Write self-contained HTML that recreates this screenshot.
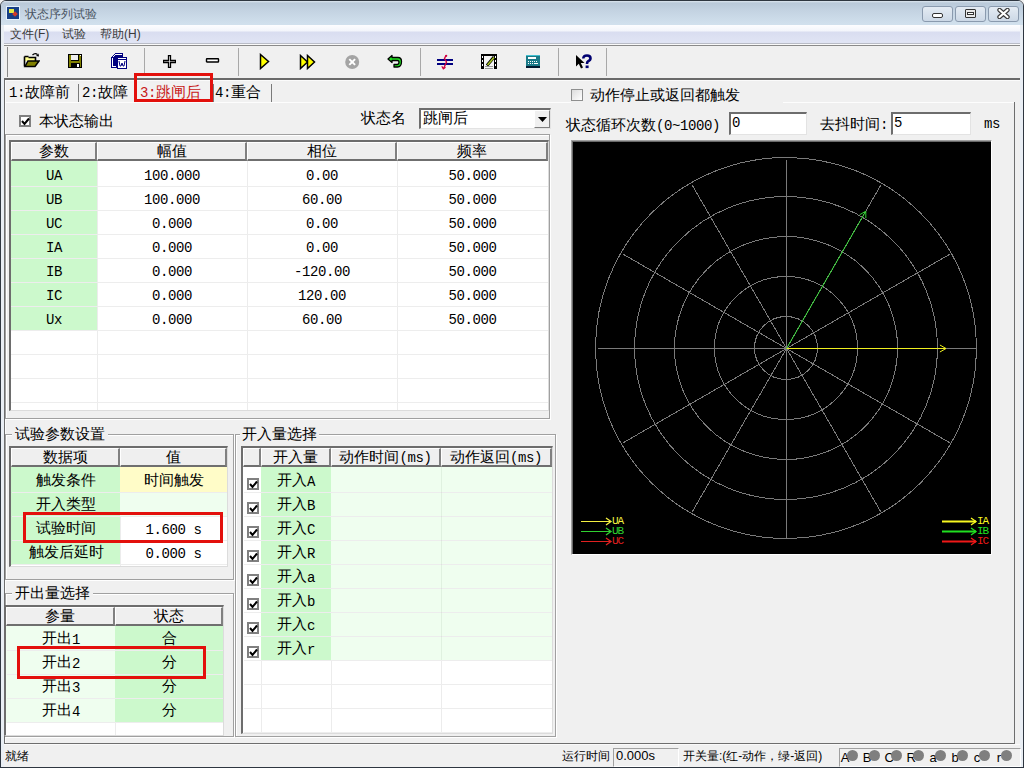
<!DOCTYPE html>
<html><head><meta charset="utf-8">
<style>
*{margin:0;padding:0;box-sizing:border-box}
html,body{width:1024px;height:768px;overflow:hidden;background:#f0f0f0}
body{position:relative;font-family:"Liberation Sans",sans-serif;font-size:12px;color:#000}
.a{position:absolute}
.t{position:absolute;white-space:nowrap;line-height:16px;font-size:15px}
.m{font-family:"Liberation Mono",monospace;font-size:14px;letter-spacing:-0.4px}
.hl{position:absolute;height:1px}
.vl{position:absolute;width:1px}
.etch{position:absolute;border:1px solid #a0a0a0;box-shadow:1px 1px 0 #fff, inset 1px 1px 0 #fff}
.sunk{position:absolute;border-top:1px solid #a0a0a0;border-left:1px solid #a0a0a0;border-right:1px solid #fff;border-bottom:1px solid #fff}
.sunk2{position:absolute;border-top:2px solid #6d6d6d;border-left:2px solid #6d6d6d;border-right:1px solid #e3e3e3;border-bottom:1px solid #e3e3e3}
.hdr{position:absolute;background:#efefef;border-right:2px solid #808080;border-bottom:2px solid #6f6f6f;border-top:1px solid #fff;border-left:1px solid #fff;text-align:center;line-height:16px;font-size:15px;white-space:nowrap}
.cell{position:absolute;z-index:3;text-align:center;white-space:nowrap;line-height:24px;font-size:15px}
.red{position:absolute;z-index:4;border:3px solid #e3100c}
.cell .m{position:relative;top:1px}
.cb{position:absolute;z-index:3;width:12px;height:12px;background:#fff;border:2px solid #808080;box-shadow:inset 0 0 0 0 #000}
.c{display:inline-block;width:1em;text-align:center;font-style:normal}
</style></head><body>

<!-- window frame -->
<div class="a" style="left:0;top:0;width:1024px;height:768px;border:1px solid #2e3640;border-radius:6px 6px 0 0"></div>
<!-- title bar -->
<div class="a" style="left:1px;top:1px;width:1022px;height:24px;border-radius:5px 5px 0 0;background:linear-gradient(#dde6ef 0px,#b9c9d9 2px,#c4d3e2 10px,#d1e0ed 23px)"></div>
<div class="a" style="left:6px;top:6px;width:14px;height:14px;background:#173f85;border:1px solid #e6f2fb"></div>
<div class="a" style="left:9px;top:9px;width:5px;height:4px;background:#e4e848"></div>
<div class="a" style="left:13px;top:12px;width:4px;height:4px;background:#d23a28;transform:rotate(45deg)"></div>
<div class="t" style="left:25px;top:6px;color:#4a5462;font-size:12px;line-height:16px"><i class="c">状</i><i class="c">态</i><i class="c">序</i><i class="c">列</i><i class="c">试</i><i class="c">验</i></div>
<!-- caption buttons -->
<div class="a" style="left:922px;top:6px;width:31px;height:16px;border:1px solid #8a9aae;border-radius:3px;background:linear-gradient(#e4ebf3,#ccd8e6)"></div>
<div class="a" style="left:932px;top:13px;width:11px;height:5px;border:1px solid #333;background:#fff;border-radius:2px"></div>
<div class="a" style="left:955px;top:6px;width:31px;height:16px;border:1px solid #8a9aae;border-radius:3px;background:linear-gradient(#e4ebf3,#ccd8e6)"></div>
<div class="a" style="left:965px;top:9px;width:11px;height:9px;border:1px solid #333;border-radius:1px;background:#e8e8e8"></div>
<div class="a" style="left:967px;top:12px;width:7px;height:3px;border:1px solid #333;background:#fff"></div>
<div class="a" style="left:988px;top:6px;width:31px;height:16px;border:1px solid #8a9aae;border-radius:3px;background:linear-gradient(#e4ebf3,#ccd8e6)"></div>
<svg class="a" style="left:997px;top:8px" width="13" height="11" viewBox="0 0 13 11"><path d="M2.5 2 L10.5 9 M10.5 2 L2.5 9" stroke="#3a3a3a" stroke-width="4.4" stroke-linecap="round"/><path d="M2.5 2 L10.5 9 M10.5 2 L2.5 9" stroke="#fff" stroke-width="2.2" stroke-linecap="round"/></svg>

<!-- left/right window sides -->
<div class="a" style="left:1px;top:25px;width:3px;height:742px;background:#e9eef4"></div>
<div class="a" style="left:1020px;top:25px;width:3px;height:742px;background:#e9eef4"></div>

<!-- menu bar -->
<div class="a" style="left:4px;top:25px;width:1016px;height:18px;background:linear-gradient(#fdfdff 0px,#f3f5fb 6px,#d9ddf0 7px,#e0e4f4 17px)"></div>
<div class="t" style="left:10px;top:26px;font-size:12px;color:#3a3a3a"><i class="c">文</i><i class="c">件</i>(F)</div>
<div class="t" style="left:62px;top:26px;font-size:12px;color:#3a3a3a"><i class="c">试</i><i class="c">验</i></div>
<div class="t" style="left:100px;top:26px;font-size:12px;color:#3a3a3a"><i class="c">帮</i><i class="c">助</i>(H)</div>
<div class="hl" style="left:4px;top:43px;width:1016px;background:#b9bcc6"></div>
<div class="hl" style="left:4px;top:44px;width:1016px;background:#fafafa"></div>
<div class="hl" style="left:4px;top:45px;width:1016px;background:#8a8a8a"></div>

<!-- toolbar -->
<div class="a" style="left:4px;top:46px;width:1016px;height:33px;background:#f0f0f0"></div>
<div class="vl" style="left:7px;top:47px;height:30px;background:#8a8a8a"></div>
<div class="hl" style="left:4px;top:78px;width:1016px;height:2px;background:#6a6a6a"></div>
<div class="vl" style="left:144px;top:48px;height:28px;background:#a8a8a8"></div>
<div class="vl" style="left:238px;top:48px;height:28px;background:#a8a8a8"></div>
<div class="vl" style="left:420px;top:48px;height:28px;background:#a8a8a8"></div>
<div class="vl" style="left:558px;top:48px;height:28px;background:#a8a8a8"></div>
<div class="vl" style="left:606px;top:48px;height:28px;background:#a8a8a8"></div>
<svg class="a" style="left:23px;top:52px" width="17" height="16" viewBox="0 0 17 16" shape-rendering="crispEdges"><path d="M2 4 H5 V5 H12 V9 H2 Z" fill="#ffff90"/><path d="M1.5 14.5 V4.5 M1.5 4.5 H5.5 M5.5 5.5 H12.5 V9" stroke="#000" stroke-width="1.6" fill="none" shape-rendering="auto"/><path d="M5 9 H16 L12 14.5 H2 Z" fill="#808000" stroke="#000" stroke-width="1.5" shape-rendering="auto"/><path d="M9.5 3 Q12 0.5 14.5 2.5" stroke="#000" stroke-width="1.3" fill="none" shape-rendering="auto"/><path d="M13 4 L16 4.5 L15.5 1.5 Z" fill="#000" shape-rendering="auto"/></svg>
<svg class="a" style="left:68px;top:54px" width="14" height="14" viewBox="0 0 14 14" shape-rendering="crispEdges"><rect x="0" y="0" width="14" height="14" fill="#000"/><rect x="1" y="1" width="12" height="12" fill="#808000"/><rect x="3" y="1" width="8" height="6" fill="#000"/><rect x="3" y="1" width="7" height="5" fill="#eeeeee"/><rect x="3" y="9" width="9" height="5" fill="#000"/><rect x="9" y="10" width="2" height="3" fill="#fff"/><rect x="12" y="1" width="1" height="1" fill="#fff"/></svg>
<svg class="a" style="left:110px;top:52px" width="18" height="18" viewBox="0 0 18 18" shape-rendering="crispEdges"><path d="M1 5 L5 1 H13 V16 H1 Z" fill="#000080"/><path d="M2.5 5.5 L5.5 2.5 H11.5 M2.5 5.5 V14.5 H6" stroke="#fff" stroke-width="1" fill="none"/><rect x="7" y="5" width="10" height="12" fill="#000080"/><rect x="8" y="8" width="8" height="8" fill="#fff"/><rect x="8" y="6" width="8" height="1" fill="#fff"/><path d="M9 9 L10 14 H11 L12 11 L13 14 H14 L15 9" stroke="#000080" stroke-width="1" fill="none" shape-rendering="auto"/></svg>
<svg class="a" style="left:163px;top:55px" width="13" height="13" viewBox="0 0 13 13" shape-rendering="crispEdges"><path d="M5 0 H8 V5 H13 V8 H8 V13 H5 V8 H0 V5 H5 Z" fill="#fff"/><path d="M5.5 0.5 H7.5 V5.5 H12.5 V7.5 H7.5 V12.5 H5.5 V7.5 H0.5 V5.5 H5.5 Z" fill="#fff" stroke="#000" stroke-width="1.3" shape-rendering="auto"/></svg>
<svg class="a" style="left:205px;top:58px" width="15" height="5" viewBox="0 0 15 5" shape-rendering="crispEdges"><rect x="1.5" y="0.8" width="12" height="3.2" rx="0.5" fill="#fff" stroke="#000" stroke-width="1.4" shape-rendering="auto"/></svg>
<svg class="a" style="left:259px;top:53px" width="11" height="17" viewBox="0 0 11 17" shape-rendering="crispEdges"><path d="M1.5 1.5 L9.5 8.5 L1.5 15.5 Z" fill="#ffff00" stroke="#000" stroke-width="1.5" stroke-linejoin="miter" shape-rendering="auto"/></svg>
<svg class="a" style="left:299px;top:54px" width="17" height="16" viewBox="0 0 17 16" shape-rendering="crispEdges"><path d="M1.5 1.5 L8.5 8 L1.5 14.5 Z" fill="#ffff00" stroke="#000" stroke-width="1.5" shape-rendering="auto"/><path d="M8.5 1.5 L15.5 8 L8.5 14.5 Z" fill="#ffff00" stroke="#000" stroke-width="1.5" shape-rendering="auto"/></svg>
<svg class="a" style="left:345px;top:55px" width="15" height="14" viewBox="0 0 15 14" shape-rendering="crispEdges"><circle cx="7.2" cy="7" r="7" fill="#a4a4a4" shape-rendering="auto"/><path d="M4.3 4.1 L10.1 9.9 M10.1 4.1 L4.3 9.9" stroke="#fff" stroke-width="2" shape-rendering="auto"/></svg>
<svg class="a" style="left:387px;top:54px" width="16" height="15" viewBox="0 0 16 15" shape-rendering="crispEdges"><path d="M1 5 L5 1.5 V3.5 H11 Q14.5 3.5 14.5 7.5 Q14.5 13 10.5 13 H7 V10.5 H10 Q12 10.5 12 8 Q12 6.5 10.5 6.5 H5 V8.5 Z" fill="#20e020" stroke="#000" stroke-width="1.3" stroke-linejoin="round" shape-rendering="auto"/></svg>
<svg class="a" style="left:436px;top:54px" width="18" height="16" viewBox="0 0 18 16" shape-rendering="crispEdges"><rect x="1" y="5" width="16" height="2" fill="#000080"/><rect x="1" y="9" width="16" height="2" fill="#000080"/><path d="M10 1.5 L8.5 4.5 L10.5 8 L8.5 12.5 L7.5 14.5" stroke="#d00040" stroke-width="1.4" fill="none" shape-rendering="auto"/><path d="M5.8 12.2 L7.3 14.8 L9.5 13.2" stroke="#d00040" stroke-width="1.2" fill="none" shape-rendering="auto"/><circle cx="10.2" cy="1.8" r="1.1" fill="#d00040" shape-rendering="auto"/></svg>
<svg class="a" style="left:480px;top:53px" width="18" height="17" viewBox="0 0 18 17" shape-rendering="crispEdges"><rect x="1" y="1" width="16" height="15" fill="#f4f4f4"/><rect x="1" y="1" width="3" height="15" fill="#000"/><rect x="14" y="1" width="3" height="15" fill="#000"/><rect x="1" y="1" width="16" height="1.5" fill="#000"/><rect x="2" y="3" width="1" height="2" fill="#fff"/><rect x="2" y="7" width="1" height="2" fill="#fff"/><rect x="2" y="11" width="1" height="2" fill="#fff"/><rect x="15" y="3" width="1" height="2" fill="#fff"/><rect x="15" y="7" width="1" height="2" fill="#fff"/><rect x="15" y="11" width="1" height="2" fill="#fff"/><path d="M7 12.5 L14 4" stroke="#000" stroke-width="3" shape-rendering="auto"/><path d="M7.5 12 L14 4.5" stroke="#a8c820" stroke-width="1.6" shape-rendering="auto"/><rect x="5" y="13" width="8" height="1" fill="#9a9a9a"/><rect x="5" y="14.5" width="8" height="1" fill="#9a9a9a"/></svg>
<svg class="a" style="left:525px;top:54px" width="16" height="14" viewBox="0 0 16 14" shape-rendering="crispEdges"><rect x="1" y="1" width="14" height="12" fill="#1a7a88"/><rect x="1" y="12" width="14" height="1.5" fill="#001a30"/><rect x="1" y="1" width="14" height="1" fill="#40c0d0"/><rect x="3" y="3" width="8" height="2" fill="#fff"/><rect x="3" y="7" width="1" height="1" fill="#fff"/><rect x="5" y="7" width="1" height="1" fill="#fff"/><rect x="7" y="7" width="1" height="1" fill="#fff"/><rect x="9" y="7" width="1" height="1" fill="#fff"/><rect x="11" y="7" width="1" height="1" fill="#fff"/><rect x="3" y="9" width="1" height="1" fill="#fff"/><rect x="5" y="9" width="1" height="1" fill="#fff"/><rect x="7" y="9" width="1" height="1" fill="#fff"/><rect x="9" y="9" width="4" height="1" fill="#fff"/></svg>
<svg class="a" style="left:575px;top:54px" width="17" height="16" viewBox="0 0 17 16"><path d="M1 1 L1 12.5 L3.8 9.8 L6 14.5 L8 13.5 L5.8 9 L9.5 9 Z" fill="#000"/><path d="M8.3 4.5 Q8.3 1.5 12 1.5 Q15.5 1.5 15.5 4.3 Q15.5 6.2 13.2 7.2 Q12 7.8 12 10" stroke="#000070" stroke-width="2.6" fill="none"/><rect x="10.6" y="11.5" width="3" height="2.6" fill="#000070"/></svg>

<!-- main frame -->
<div class="vl" style="left:4px;top:80px;height:664px;background:#6e6e6e"></div>
<div class="vl" style="left:5px;top:80px;height:663px;background:#fbfbfb"></div>
<div class="hl" style="left:5px;top:80px;width:1015px;background:#fbfbfb"></div>
<div class="hl" style="left:5px;top:102px;width:566px;background:#fdfdfd"></div>
<div class="hl" style="left:783px;top:102px;width:231px;background:#fdfdfd"></div>
<div class="vl" style="left:1014px;top:102px;height:642px;background:#6e6e6e"></div>
<div class="hl" style="left:4px;top:743px;width:1011px;height:1px;background:#6e6e6e"></div>

<div class="a" style="left:8px;top:83px;width:70px;height:19px;background:#f1f1f1"></div>
<div class="vl" style="left:78px;top:84px;height:18px;background:#7a7a7a"></div>
<div class="t" style="left:9px;top:84px;color:#000"><span class="m" style="font-size:14px">1:</span><i class="c">故</i><i class="c">障</i><i class="c">前</i></div>
<div class="a" style="left:79px;top:83px;width:55px;height:19px;background:#f1f1f1"></div>
<div class="vl" style="left:134px;top:84px;height:18px;background:#7a7a7a"></div>
<div class="t" style="left:82px;top:84px;color:#000"><span class="m" style="font-size:14px">2:</span><i class="c">故</i><i class="c">障</i></div>
<div class="a" style="left:135px;top:83px;width:78px;height:19px;background:#f1f1f1"></div>
<div class="vl" style="left:213px;top:84px;height:18px;background:#7a7a7a"></div>
<div class="t" style="left:140px;top:84px;color:#c81818"><span class="m" style="font-size:14px">3:</span><i class="c">跳</i><i class="c">闸</i><i class="c">后</i></div>
<div class="a" style="left:214px;top:83px;width:57px;height:19px;background:#f1f1f1"></div>
<div class="vl" style="left:271px;top:84px;height:18px;background:#7a7a7a"></div>
<div class="t" style="left:215px;top:84px;color:#000"><span class="m" style="font-size:14px">4:</span><i class="c">重</i><i class="c">合</i></div>
<div class="red" style="left:134px;top:73px;width:79px;height:29px"></div>
<div class="cb" style="left:19px;top:115px"></div>
<svg class="a" style="z-index:3;left:21px;top:117px" width="9" height="9" viewBox="0 0 9 9"><path d="M1 4 L3.5 7 L8 1.5" stroke="#000" stroke-width="2" fill="none"/></svg>
<div class="t" style="left:39px;top:113px"><i class="c">本</i><i class="c">状</i><i class="c">态</i><i class="c">输</i><i class="c">出</i></div>
<div class="t" style="left:361px;top:110px"><i class="c">状</i><i class="c">态</i><i class="c">名</i></div>
<div class="sunk2" style="left:419px;top:108px;width:132px;height:21px;background:#fff"></div>
<div class="t" style="left:423px;top:110px"><i class="c">跳</i><i class="c">闸</i><i class="c">后</i></div>
<div class="a" style="left:534px;top:110px;width:16px;height:18px;background:#f0f0f0;border-right:1px solid #808080;border-bottom:1px solid #808080;border-left:1px solid #fff;border-top:1px solid #fff"></div>
<svg class="a" style="left:538px;top:117px" width="9" height="5"><path d="M0 0 H9 L4.5 5 Z" fill="#000"/></svg>
<div class="etch" style="left:5px;top:134px;width:545px;height:285px"></div>
<div class="a" style="left:9px;top:140px;width:540px;height:271px;background:#fff;border-top:2px solid #6d6d6d;border-left:2px solid #6d6d6d;border-right:1px solid #dcdcdc;border-bottom:1px solid #dcdcdc"></div>
<div class="hdr" style="left:11px;top:142px;width:86px;height:19px"><i class="c">参</i><i class="c">数</i></div>
<div class="hdr" style="left:97px;top:142px;width:150px;height:19px"><i class="c">幅</i><i class="c">值</i></div>
<div class="hdr" style="left:247px;top:142px;width:150px;height:19px"><i class="c">相</i><i class="c">位</i></div>
<div class="hdr" style="left:397px;top:142px;width:151px;height:19px"><i class="c">频</i><i class="c">率</i></div>
<div class="a" style="left:11px;top:161px;width:86px;height:26px;background:#ccf9cc;z-index:1"></div>
<div class="hl" style="left:11px;top:186px;width:537px;background:#e0e0e0"></div><div class="hl" style="z-index:2;left:11px;top:186px;width:537px;background:#ededed"></div>
<div class="a" style="left:11px;top:186px;width:86px;height:25px;background:#ccf9cc;z-index:1"></div>
<div class="hl" style="left:11px;top:210px;width:537px;background:#e0e0e0"></div><div class="hl" style="z-index:2;left:11px;top:210px;width:537px;background:#ededed"></div>
<div class="a" style="left:11px;top:210px;width:86px;height:25px;background:#ccf9cc;z-index:1"></div>
<div class="hl" style="left:11px;top:234px;width:537px;background:#e0e0e0"></div><div class="hl" style="z-index:2;left:11px;top:234px;width:537px;background:#ededed"></div>
<div class="a" style="left:11px;top:234px;width:86px;height:25px;background:#ccf9cc;z-index:1"></div>
<div class="hl" style="left:11px;top:258px;width:537px;background:#e0e0e0"></div><div class="hl" style="z-index:2;left:11px;top:258px;width:537px;background:#ededed"></div>
<div class="a" style="left:11px;top:258px;width:86px;height:25px;background:#ccf9cc;z-index:1"></div>
<div class="hl" style="left:11px;top:282px;width:537px;background:#e0e0e0"></div><div class="hl" style="z-index:2;left:11px;top:282px;width:537px;background:#ededed"></div>
<div class="a" style="left:11px;top:282px;width:86px;height:25px;background:#ccf9cc;z-index:1"></div>
<div class="hl" style="left:11px;top:306px;width:537px;background:#e0e0e0"></div><div class="hl" style="z-index:2;left:11px;top:306px;width:537px;background:#ededed"></div>
<div class="a" style="left:11px;top:306px;width:86px;height:25px;background:#ccf9cc;z-index:1"></div>
<div class="hl" style="left:11px;top:330px;width:537px;background:#e0e0e0"></div><div class="hl" style="z-index:2;left:11px;top:330px;width:537px;background:#ededed"></div>
<div class="hl" style="left:11px;top:354px;width:537px;background:#e0e0e0"></div><div class="hl" style="z-index:2;left:11px;top:354px;width:537px;background:#ededed"></div>
<div class="hl" style="left:11px;top:378px;width:537px;background:#e0e0e0"></div><div class="hl" style="z-index:2;left:11px;top:378px;width:537px;background:#ededed"></div>
<div class="hl" style="left:11px;top:402px;width:537px;background:#e0e0e0"></div><div class="hl" style="z-index:2;left:11px;top:402px;width:537px;background:#ededed"></div>
<div class="vl" style="left:97px;top:161px;height:249px;background:#ececec"></div>
<div class="vl" style="left:247px;top:161px;height:249px;background:#ececec"></div>
<div class="vl" style="left:397px;top:161px;height:249px;background:#ececec"></div>
<div class="cell" style="left:11px;top:162px;width:86px;height:24px"><span class="m">UA</span></div>
<div class="cell" style="left:97px;top:162px;width:150px;height:24px"><span class="m">100.000</span></div>
<div class="cell" style="left:247px;top:162px;width:150px;height:24px"><span class="m">0.00</span></div>
<div class="cell" style="left:397px;top:162px;width:151px;height:24px"><span class="m">50.000</span></div>
<div class="cell" style="left:11px;top:186px;width:86px;height:24px"><span class="m">UB</span></div>
<div class="cell" style="left:97px;top:186px;width:150px;height:24px"><span class="m">100.000</span></div>
<div class="cell" style="left:247px;top:186px;width:150px;height:24px"><span class="m">60.00</span></div>
<div class="cell" style="left:397px;top:186px;width:151px;height:24px"><span class="m">50.000</span></div>
<div class="cell" style="left:11px;top:210px;width:86px;height:24px"><span class="m">UC</span></div>
<div class="cell" style="left:97px;top:210px;width:150px;height:24px"><span class="m">0.000</span></div>
<div class="cell" style="left:247px;top:210px;width:150px;height:24px"><span class="m">0.00</span></div>
<div class="cell" style="left:397px;top:210px;width:151px;height:24px"><span class="m">50.000</span></div>
<div class="cell" style="left:11px;top:234px;width:86px;height:24px"><span class="m">IA</span></div>
<div class="cell" style="left:97px;top:234px;width:150px;height:24px"><span class="m">0.000</span></div>
<div class="cell" style="left:247px;top:234px;width:150px;height:24px"><span class="m">0.00</span></div>
<div class="cell" style="left:397px;top:234px;width:151px;height:24px"><span class="m">50.000</span></div>
<div class="cell" style="left:11px;top:258px;width:86px;height:24px"><span class="m">IB</span></div>
<div class="cell" style="left:97px;top:258px;width:150px;height:24px"><span class="m">0.000</span></div>
<div class="cell" style="left:247px;top:258px;width:150px;height:24px"><span class="m">-120.00</span></div>
<div class="cell" style="left:397px;top:258px;width:151px;height:24px"><span class="m">50.000</span></div>
<div class="cell" style="left:11px;top:282px;width:86px;height:24px"><span class="m">IC</span></div>
<div class="cell" style="left:97px;top:282px;width:150px;height:24px"><span class="m">0.000</span></div>
<div class="cell" style="left:247px;top:282px;width:150px;height:24px"><span class="m">120.00</span></div>
<div class="cell" style="left:397px;top:282px;width:151px;height:24px"><span class="m">50.000</span></div>
<div class="cell" style="left:11px;top:306px;width:86px;height:24px"><span class="m">Ux</span></div>
<div class="cell" style="left:97px;top:306px;width:150px;height:24px"><span class="m">0.000</span></div>
<div class="cell" style="left:247px;top:306px;width:150px;height:24px"><span class="m">60.00</span></div>
<div class="cell" style="left:397px;top:306px;width:151px;height:24px"><span class="m">50.000</span></div>
<div class="etch" style="left:5px;top:434px;width:229px;height:146px"></div>
<div class="t" style="left:12px;top:426px;padding:0 3px;background:#f0f0f0"><i class="c">试</i><i class="c">验</i><i class="c">参</i><i class="c">数</i><i class="c">设</i><i class="c">置</i></div>
<div class="a" style="left:9px;top:446px;width:219px;height:121px;background:#fff;border-top:2px solid #6d6d6d;border-left:2px solid #6d6d6d;border-right:1px solid #dcdcdc;border-bottom:1px solid #dcdcdc"></div>
<div class="hdr" style="left:11px;top:448px;width:109px;height:19px"><i class="c">数</i><i class="c">据</i><i class="c">项</i></div>
<div class="hdr" style="left:120px;top:448px;width:107px;height:19px"><i class="c">值</i></div>
<div class="a" style="left:11px;top:467px;width:109px;height:26px;background:#ccf9cc;z-index:1"></div>
<div class="a" style="left:120px;top:467px;width:107px;height:26px;background:#fffcc8;z-index:1"></div>
<div class="hl" style="left:12px;top:492px;width:215px;background:#e0e0e0"></div><div class="hl" style="z-index:2;left:12px;top:492px;width:215px;background:#ededed"></div>
<div class="cell" style="left:12px;top:468px;width:108px;height:24px"><i class="c">触</i><i class="c">发</i><i class="c">条</i><i class="c">件</i></div>
<div class="cell" style="left:120px;top:468px;width:107px;height:24px"><i class="c">时</i><i class="c">间</i><i class="c">触</i><i class="c">发</i></div>
<div class="a" style="left:11px;top:492px;width:109px;height:25px;background:#ccf9cc;z-index:1"></div>
<div class="a" style="left:120px;top:492px;width:107px;height:25px;background:#effeef;z-index:1"></div>
<div class="hl" style="left:12px;top:516px;width:215px;background:#e0e0e0"></div><div class="hl" style="z-index:2;left:12px;top:516px;width:215px;background:#ededed"></div>
<div class="cell" style="left:12px;top:492px;width:108px;height:24px"><i class="c">开</i><i class="c">入</i><i class="c">类</i><i class="c">型</i></div>
<div class="cell" style="left:120px;top:492px;width:107px;height:24px"></div>
<div class="a" style="left:11px;top:516px;width:109px;height:25px;background:#ccf9cc;z-index:1"></div>
<div class="a" style="left:120px;top:516px;width:107px;height:24px;background:#fff"></div>
<div class="hl" style="left:12px;top:540px;width:215px;background:#e0e0e0"></div><div class="hl" style="z-index:2;left:12px;top:540px;width:215px;background:#ededed"></div>
<div class="cell" style="left:12px;top:516px;width:108px;height:24px"><i class="c">试</i><i class="c">验</i><i class="c">时</i><i class="c">间</i></div>
<div class="cell" style="left:120px;top:516px;width:107px;height:24px"><span class="m">1.600 s</span></div>
<div class="a" style="left:11px;top:540px;width:109px;height:25px;background:#ccf9cc;z-index:1"></div>
<div class="a" style="left:120px;top:540px;width:107px;height:24px;background:#fff"></div>
<div class="hl" style="left:12px;top:564px;width:215px;background:#e0e0e0"></div><div class="hl" style="z-index:2;left:12px;top:564px;width:215px;background:#ededed"></div>
<div class="cell" style="left:12px;top:540px;width:108px;height:24px"><i class="c">触</i><i class="c">发</i><i class="c">后</i><i class="c">延</i><i class="c">时</i></div>
<div class="cell" style="left:120px;top:540px;width:107px;height:24px"><span class="m">0.000 s</span></div>
<div class="vl" style="left:120px;top:467px;height:99px;background:#ececec"></div>
<div class="red" style="left:23px;top:512px;width:200px;height:31px"></div>
<div class="etch" style="left:5px;top:593px;width:229px;height:144px"></div>
<div class="t" style="left:12px;top:585px;padding:0 3px;background:#f0f0f0"><i class="c">开</i><i class="c">出</i><i class="c">量</i><i class="c">选</i><i class="c">择</i></div>
<div class="a" style="left:4px;top:605px;width:220px;height:131px;background:#fff;border-top:2px solid #6d6d6d;border-left:2px solid #6d6d6d;border-right:1px solid #dcdcdc;border-bottom:1px solid #dcdcdc"></div>
<div class="hdr" style="left:6px;top:607px;width:109px;height:19px"><i class="c">参</i><i class="c">量</i></div>
<div class="hdr" style="left:115px;top:607px;width:108px;height:19px"><i class="c">状</i><i class="c">态</i></div>
<div class="a" style="left:6px;top:626px;width:109px;height:25px;background:#effeef;z-index:1"></div>
<div class="a" style="left:115px;top:626px;width:108px;height:25px;background:#ccf9cc;z-index:1"></div>
<div class="hl" style="left:7px;top:650px;width:216px;background:#e0e0e0"></div><div class="hl" style="z-index:2;left:7px;top:650px;width:216px;background:#ededed"></div>
<div class="cell" style="left:7px;top:626px;width:108px;height:24px"><i class="c">开</i><i class="c">出</i><span class="m">1</span></div>
<div class="cell" style="left:115px;top:626px;width:108px;height:24px"><i class="c">合</i></div>
<div class="a" style="left:6px;top:650px;width:109px;height:25px;background:#effeef;z-index:1"></div>
<div class="a" style="left:115px;top:650px;width:108px;height:25px;background:#ccf9cc;z-index:1"></div>
<div class="hl" style="left:7px;top:674px;width:216px;background:#e0e0e0"></div><div class="hl" style="z-index:2;left:7px;top:674px;width:216px;background:#ededed"></div>
<div class="cell" style="left:7px;top:650px;width:108px;height:24px"><i class="c">开</i><i class="c">出</i><span class="m">2</span></div>
<div class="cell" style="left:115px;top:650px;width:108px;height:24px"><i class="c">分</i></div>
<div class="a" style="left:6px;top:674px;width:109px;height:25px;background:#effeef;z-index:1"></div>
<div class="a" style="left:115px;top:674px;width:108px;height:25px;background:#ccf9cc;z-index:1"></div>
<div class="hl" style="left:7px;top:698px;width:216px;background:#e0e0e0"></div><div class="hl" style="z-index:2;left:7px;top:698px;width:216px;background:#ededed"></div>
<div class="cell" style="left:7px;top:674px;width:108px;height:24px"><i class="c">开</i><i class="c">出</i><span class="m">3</span></div>
<div class="cell" style="left:115px;top:674px;width:108px;height:24px"><i class="c">分</i></div>
<div class="a" style="left:6px;top:698px;width:109px;height:25px;background:#effeef;z-index:1"></div>
<div class="a" style="left:115px;top:698px;width:108px;height:25px;background:#ccf9cc;z-index:1"></div>
<div class="hl" style="left:7px;top:722px;width:216px;background:#e0e0e0"></div><div class="hl" style="z-index:2;left:7px;top:722px;width:216px;background:#ededed"></div>
<div class="cell" style="left:7px;top:698px;width:108px;height:24px"><i class="c">开</i><i class="c">出</i><span class="m">4</span></div>
<div class="cell" style="left:115px;top:698px;width:108px;height:24px"><i class="c">分</i></div>
<div class="vl" style="left:115px;top:626px;height:109px;background:#ececec"></div>
<div class="red" style="left:17px;top:646px;width:189px;height:33px"></div>
<div class="etch" style="left:235px;top:434px;width:321px;height:303px"></div>
<div class="t" style="left:240px;top:426px;padding:0 2px;background:#f0f0f0"><i class="c">开</i><i class="c">入</i><i class="c">量</i><i class="c">选</i><i class="c">择</i></div>
<div class="a" style="left:241px;top:446px;width:312px;height:288px;background:#fff;border-top:2px solid #6d6d6d;border-left:2px solid #6d6d6d;border-right:1px solid #dcdcdc;border-bottom:1px solid #dcdcdc"></div>
<div class="hdr" style="left:243px;top:448px;width:18px;height:19px"></div>
<div class="hdr" style="left:261px;top:448px;width:70px;height:19px"><i class="c">开</i><i class="c">入</i><i class="c">量</i></div>
<div class="hdr" style="left:331px;top:448px;width:110px;height:19px"><i class="c">动</i><i class="c">作</i><i class="c">时</i><i class="c">间</i><span class="m">(ms)</span></div>
<div class="hdr" style="left:441px;top:448px;width:111px;height:19px"><i class="c">动</i><i class="c">作</i><i class="c">返</i><i class="c">回</i><span class="m">(ms)</span></div>
<div class="a" style="left:261px;top:467px;width:70px;height:26px;background:#ccf9cc;z-index:1"></div>
<div class="a" style="left:331px;top:467px;width:221px;height:26px;background:#effeef;z-index:1"></div>
<div class="cell" style="left:261px;top:468px;width:70px;height:24px"><i class="c">开</i><i class="c">入</i><span class="m">A</span></div>
<div class="cb" style="left:247px;top:478px"></div>
<svg class="a" style="z-index:3;left:249px;top:480px" width="9" height="9" viewBox="0 0 9 9"><path d="M1 4 L3.5 7 L8 1.5" stroke="#000" stroke-width="2" fill="none"/></svg>
<div class="hl" style="left:244px;top:492px;width:308px;background:#e0e0e0"></div><div class="hl" style="z-index:2;left:244px;top:492px;width:308px;background:#ededed"></div>
<div class="a" style="left:261px;top:492px;width:70px;height:25px;background:#ccf9cc;z-index:1"></div>
<div class="a" style="left:331px;top:492px;width:221px;height:25px;background:#effeef;z-index:1"></div>
<div class="cell" style="left:261px;top:492px;width:70px;height:24px"><i class="c">开</i><i class="c">入</i><span class="m">B</span></div>
<div class="cb" style="left:247px;top:502px"></div>
<svg class="a" style="z-index:3;left:249px;top:504px" width="9" height="9" viewBox="0 0 9 9"><path d="M1 4 L3.5 7 L8 1.5" stroke="#000" stroke-width="2" fill="none"/></svg>
<div class="hl" style="left:244px;top:516px;width:308px;background:#e0e0e0"></div><div class="hl" style="z-index:2;left:244px;top:516px;width:308px;background:#ededed"></div>
<div class="a" style="left:261px;top:516px;width:70px;height:25px;background:#ccf9cc;z-index:1"></div>
<div class="a" style="left:331px;top:516px;width:221px;height:25px;background:#effeef;z-index:1"></div>
<div class="cell" style="left:261px;top:516px;width:70px;height:24px"><i class="c">开</i><i class="c">入</i><span class="m">C</span></div>
<div class="cb" style="left:247px;top:526px"></div>
<svg class="a" style="z-index:3;left:249px;top:528px" width="9" height="9" viewBox="0 0 9 9"><path d="M1 4 L3.5 7 L8 1.5" stroke="#000" stroke-width="2" fill="none"/></svg>
<div class="hl" style="left:244px;top:540px;width:308px;background:#e0e0e0"></div><div class="hl" style="z-index:2;left:244px;top:540px;width:308px;background:#ededed"></div>
<div class="a" style="left:261px;top:540px;width:70px;height:25px;background:#ccf9cc;z-index:1"></div>
<div class="a" style="left:331px;top:540px;width:221px;height:25px;background:#effeef;z-index:1"></div>
<div class="cell" style="left:261px;top:540px;width:70px;height:24px"><i class="c">开</i><i class="c">入</i><span class="m">R</span></div>
<div class="cb" style="left:247px;top:550px"></div>
<svg class="a" style="z-index:3;left:249px;top:552px" width="9" height="9" viewBox="0 0 9 9"><path d="M1 4 L3.5 7 L8 1.5" stroke="#000" stroke-width="2" fill="none"/></svg>
<div class="hl" style="left:244px;top:564px;width:308px;background:#e0e0e0"></div><div class="hl" style="z-index:2;left:244px;top:564px;width:308px;background:#ededed"></div>
<div class="a" style="left:261px;top:564px;width:70px;height:25px;background:#ccf9cc;z-index:1"></div>
<div class="a" style="left:331px;top:564px;width:221px;height:25px;background:#effeef;z-index:1"></div>
<div class="cell" style="left:261px;top:564px;width:70px;height:24px"><i class="c">开</i><i class="c">入</i><span class="m">a</span></div>
<div class="cb" style="left:247px;top:574px"></div>
<svg class="a" style="z-index:3;left:249px;top:576px" width="9" height="9" viewBox="0 0 9 9"><path d="M1 4 L3.5 7 L8 1.5" stroke="#000" stroke-width="2" fill="none"/></svg>
<div class="hl" style="left:244px;top:588px;width:308px;background:#e0e0e0"></div><div class="hl" style="z-index:2;left:244px;top:588px;width:308px;background:#ededed"></div>
<div class="a" style="left:261px;top:588px;width:70px;height:25px;background:#ccf9cc;z-index:1"></div>
<div class="a" style="left:331px;top:588px;width:221px;height:25px;background:#effeef;z-index:1"></div>
<div class="cell" style="left:261px;top:588px;width:70px;height:24px"><i class="c">开</i><i class="c">入</i><span class="m">b</span></div>
<div class="cb" style="left:247px;top:598px"></div>
<svg class="a" style="z-index:3;left:249px;top:600px" width="9" height="9" viewBox="0 0 9 9"><path d="M1 4 L3.5 7 L8 1.5" stroke="#000" stroke-width="2" fill="none"/></svg>
<div class="hl" style="left:244px;top:612px;width:308px;background:#e0e0e0"></div><div class="hl" style="z-index:2;left:244px;top:612px;width:308px;background:#ededed"></div>
<div class="a" style="left:261px;top:612px;width:70px;height:25px;background:#ccf9cc;z-index:1"></div>
<div class="a" style="left:331px;top:612px;width:221px;height:25px;background:#effeef;z-index:1"></div>
<div class="cell" style="left:261px;top:612px;width:70px;height:24px"><i class="c">开</i><i class="c">入</i><span class="m">c</span></div>
<div class="cb" style="left:247px;top:622px"></div>
<svg class="a" style="z-index:3;left:249px;top:624px" width="9" height="9" viewBox="0 0 9 9"><path d="M1 4 L3.5 7 L8 1.5" stroke="#000" stroke-width="2" fill="none"/></svg>
<div class="hl" style="left:244px;top:636px;width:308px;background:#e0e0e0"></div><div class="hl" style="z-index:2;left:244px;top:636px;width:308px;background:#ededed"></div>
<div class="a" style="left:261px;top:636px;width:70px;height:25px;background:#ccf9cc;z-index:1"></div>
<div class="a" style="left:331px;top:636px;width:221px;height:25px;background:#effeef;z-index:1"></div>
<div class="cell" style="left:261px;top:636px;width:70px;height:24px"><i class="c">开</i><i class="c">入</i><span class="m">r</span></div>
<div class="cb" style="left:247px;top:646px"></div>
<svg class="a" style="z-index:3;left:249px;top:648px" width="9" height="9" viewBox="0 0 9 9"><path d="M1 4 L3.5 7 L8 1.5" stroke="#000" stroke-width="2" fill="none"/></svg>
<div class="hl" style="left:244px;top:660px;width:308px;background:#e0e0e0"></div><div class="hl" style="z-index:2;left:244px;top:660px;width:308px;background:#ededed"></div>
<div class="hl" style="left:244px;top:684px;width:308px;background:#e0e0e0"></div><div class="hl" style="z-index:2;left:244px;top:684px;width:308px;background:#ededed"></div>
<div class="hl" style="left:244px;top:708px;width:308px;background:#e0e0e0"></div><div class="hl" style="z-index:2;left:244px;top:708px;width:308px;background:#ededed"></div>
<div class="hl" style="left:244px;top:732px;width:308px;background:#e0e0e0"></div><div class="hl" style="z-index:2;left:244px;top:732px;width:308px;background:#ededed"></div>
<div class="vl" style="left:261px;top:467px;height:266px;background:#ececec"></div>
<div class="vl" style="left:331px;top:467px;height:266px;background:#ececec"></div>
<div class="vl" style="left:441px;top:467px;height:266px;background:#ececec"></div>
<div class="cb" style="left:571px;top:89px;border:1px solid #8e8f8f;background:linear-gradient(135deg,#dcdcdc,#fff)"></div>
<div class="t" style="left:590px;top:87px"><i class="c">动</i><i class="c">作</i><i class="c">停</i><i class="c">止</i><i class="c">或</i><i class="c">返</i><i class="c">回</i><i class="c">都</i><i class="c">触</i><i class="c">发</i></div>
<div class="t" style="left:566px;top:117px"><i class="c">状</i><i class="c">态</i><i class="c">循</i><i class="c">环</i><i class="c">次</i><i class="c">数</i><span class="m">(0~1000)</span></div>
<div class="sunk2" style="left:729px;top:112px;width:78px;height:23px;background:#fff"></div>
<div class="t m" style="left:732px;top:115px">0</div>
<div class="t" style="left:820px;top:116px"><i class="c">去</i><i class="c">抖</i><i class="c">时</i><i class="c">间</i><span class="m">:</span></div>
<div class="sunk2" style="left:891px;top:112px;width:80px;height:23px;background:#fff"></div>
<div class="t m" style="left:894px;top:115px">5</div>
<div class="t m" style="left:984px;top:116px">ms</div>
<div class="a" style="left:571px;top:140px;width:421px;height:415px;background:#000;border-top:1px solid #a0a0a0;border-left:1px solid #a0a0a0;border-right:1px solid #fff;border-bottom:1px solid #fff;box-shadow:inset 1px 1px 0 #696969"></div>
<svg class="a" style="left:0;top:0" width="1024" height="768" viewBox="0 0 1024 768"><g stroke="#7a7a7a" stroke-width="1" fill="none" shape-rendering="crispEdges"><circle cx="786" cy="348" r="31.5"/><circle cx="786" cy="348" r="71.5"/><circle cx="786" cy="348" r="111.5"/><circle cx="786" cy="348" r="151.5"/><circle cx="786" cy="348" r="190.5"/><line x1="786.5" y1="348.5" x2="975.5" y2="348.5"/><line x1="786.5" y1="348.5" x2="950.2" y2="254.0"/><line x1="786.5" y1="348.5" x2="881.0" y2="184.8"/><line x1="786.5" y1="348.5" x2="786.5" y2="159.5"/><line x1="786.5" y1="348.5" x2="692.0" y2="184.8"/><line x1="786.5" y1="348.5" x2="622.8" y2="254.0"/><line x1="786.5" y1="348.5" x2="597.5" y2="348.5"/><line x1="786.5" y1="348.5" x2="622.8" y2="443.0"/><line x1="786.5" y1="348.5" x2="692.0" y2="512.2"/><line x1="786.5" y1="348.5" x2="786.5" y2="537.5"/><line x1="786.5" y1="348.5" x2="881.0" y2="512.2"/><line x1="786.5" y1="348.5" x2="950.2" y2="443.0"/></g><line x1="786.5" y1="348.5" x2="946.0" y2="348.5" stroke="#f0f020" stroke-width="1"/><line x1="946.0" y1="348.5" x2="939.9" y2="345.0" stroke="#f0f020" stroke-width="1"/><line x1="946.0" y1="348.5" x2="939.9" y2="352.0" stroke="#f0f020" stroke-width="1"/><line x1="786.5" y1="348.5" x2="865.8" y2="211.2" stroke="#30d030" stroke-width="1"/><line x1="865.8" y1="211.2" x2="859.7" y2="214.7" stroke="#30d030" stroke-width="1"/><line x1="865.8" y1="211.2" x2="865.8" y2="218.2" stroke="#30d030" stroke-width="1"/><line x1="581" y1="521.5" x2="611" y2="521.5" stroke="#f4f040" stroke-width="1"/><path d="M606 518.0 L611 521.5 L606 525.0" stroke="#f4f040" stroke-width="1.3" fill="none"/><line x1="581" y1="531.5" x2="611" y2="531.5" stroke="#30d030" stroke-width="1"/><path d="M606 528.0 L611 531.5 L606 535.0" stroke="#30d030" stroke-width="1.3" fill="none"/><line x1="581" y1="541.5" x2="611" y2="541.5" stroke="#e02020" stroke-width="1"/><path d="M606 538.0 L611 541.5 L606 545.0" stroke="#e02020" stroke-width="1.3" fill="none"/><line x1="942" y1="521.5" x2="976" y2="521.5" stroke="#f8f820" stroke-width="2"/><path d="M971 518.0 L976 521.5 L971 525.0" stroke="#f8f820" stroke-width="1.3" fill="none"/><line x1="942" y1="531.5" x2="976" y2="531.5" stroke="#20e020" stroke-width="2"/><path d="M971 528.0 L976 531.5 L971 535.0" stroke="#20e020" stroke-width="1.3" fill="none"/><line x1="942" y1="541.5" x2="976" y2="541.5" stroke="#f01818" stroke-width="2"/><path d="M971 538.0 L976 541.5 L971 545.0" stroke="#f01818" stroke-width="1.3" fill="none"/></svg>
<div class="t" style="left:612px;top:516px;font-family:'Liberation Mono';font-size:11px;line-height:11px;color:#f4f040;letter-spacing:-1px">UA</div>
<div class="t" style="left:612px;top:526px;font-family:'Liberation Mono';font-size:11px;line-height:11px;color:#30d030;letter-spacing:-1px">UB</div>
<div class="t" style="left:612px;top:536px;font-family:'Liberation Mono';font-size:11px;line-height:11px;color:#e02020;letter-spacing:-1px">UC</div>
<div class="t" style="left:977px;top:516px;font-family:'Liberation Mono';font-size:11px;line-height:11px;color:#f8f820;letter-spacing:-1px">IA</div>
<div class="t" style="left:977px;top:526px;font-family:'Liberation Mono';font-size:11px;line-height:11px;color:#20e020;letter-spacing:-1px">IB</div>
<div class="t" style="left:977px;top:536px;font-family:'Liberation Mono';font-size:11px;line-height:11px;color:#f01818;letter-spacing:-1px">IC</div>
<div class="vl" style="z-index:2;left:441px;top:467px;height:193px;background:rgba(0,40,0,.06)"></div>
<!-- status bar -->
<div class="hl" style="left:4px;top:744px;width:1016px;background:#fafafa"></div>
<div class="t" style="left:5px;top:748px;font-size:12px"><i class="c">就</i><i class="c">绪</i></div>
<div class="t" style="left:562px;top:748px;font-size:12px"><i class="c">运</i><i class="c">行</i><i class="c">时</i><i class="c">间</i></div>
<div class="sunk" style="left:613px;top:748px;width:66px;height:19px"></div>
<div class="t" style="left:616px;top:748px;font-size:13px">0.000s</div>
<div class="t" style="left:683px;top:748px;font-size:12px"><i class="c">开</i><i class="c">关</i><i class="c">量</i>:(<i class="c">红</i>-<i class="c">动</i><i class="c">作</i><i class="c">，</i><i class="c">绿</i>-<i class="c">返</i><i class="c">回</i>)</div>
<div class="sunk" style="left:839px;top:748px;width:182px;height:19px"></div>
<div class="t" style="left:840.5px;top:750px;font-size:13px;width:9px;text-align:center">A</div>
<div class="a" style="left:847.0px;top:750px;width:11px;height:11px;border-radius:50%;background:#7f7f7f"></div>
<div class="t" style="left:862.5px;top:750px;font-size:13px;width:9px;text-align:center">B</div>
<div class="a" style="left:869.0px;top:750px;width:11px;height:11px;border-radius:50%;background:#7f7f7f"></div>
<div class="t" style="left:884.5px;top:750px;font-size:13px;width:9px;text-align:center">C</div>
<div class="a" style="left:891.0px;top:750px;width:11px;height:11px;border-radius:50%;background:#7f7f7f"></div>
<div class="t" style="left:906.5px;top:750px;font-size:13px;width:9px;text-align:center">R</div>
<div class="a" style="left:913.0px;top:750px;width:11px;height:11px;border-radius:50%;background:#7f7f7f"></div>
<div class="t" style="left:928.5px;top:750px;font-size:13px;width:9px;text-align:center">a</div>
<div class="a" style="left:935.0px;top:750px;width:11px;height:11px;border-radius:50%;background:#7f7f7f"></div>
<div class="t" style="left:950.5px;top:750px;font-size:13px;width:9px;text-align:center">b</div>
<div class="a" style="left:957.0px;top:750px;width:11px;height:11px;border-radius:50%;background:#7f7f7f"></div>
<div class="t" style="left:972.5px;top:750px;font-size:13px;width:9px;text-align:center">c</div>
<div class="a" style="left:979.0px;top:750px;width:11px;height:11px;border-radius:50%;background:#7f7f7f"></div>
<div class="t" style="left:994.5px;top:750px;font-size:13px;width:9px;text-align:center">r</div>
<div class="a" style="left:1001.0px;top:750px;width:11px;height:11px;border-radius:50%;background:#7f7f7f"></div>
<div class="hl" style="left:0;top:767px;width:1024px;background:#2e3640"></div>

</body></html>
